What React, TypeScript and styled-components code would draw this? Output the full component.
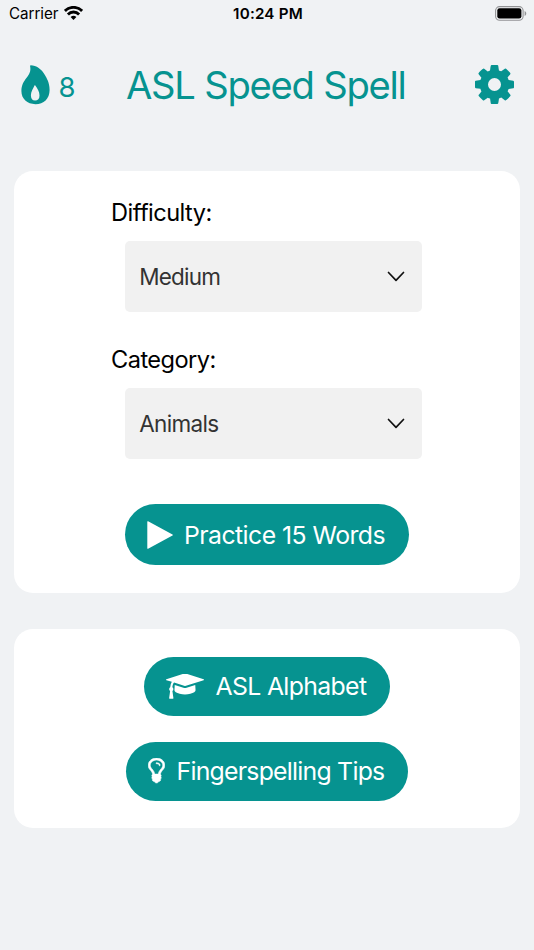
import React from 'react';
import styled, { createGlobalStyle } from 'styled-components';

const TEAL = '#069390';

const GlobalStyle = createGlobalStyle`
  * { box-sizing: border-box; }
  html, body { margin: 0; background: #f0f2f4; }
  body { font-family: Inter, "Liberation Sans", sans-serif; color: #000; }
  button { font-family: inherit; border: 0; margin: 0; }
`;

const Screen = styled.div`
  width: 534px;
  height: 950px;
  overflow: hidden;
  background: #f0f2f4;
`;

const StatusBar = styled.div`
  display: grid;
  grid-template-columns: 1fr auto 1fr;
  align-items: center;
  height: 27px;
  padding: 0 7px 0 9px;
`;

const Carrier = styled.div`
  display: flex;
  align-items: center;
  gap: 6px;
`;

const Battery = styled.svg`
  justify-self: end;
`;

const Text = styled.span<{ $size: number; $spacing?: number; $weight?: number }>`
  display: block;
  font-size: ${(p) => p.$size}px;
  letter-spacing: ${(p) => p.$spacing ?? 0}px;
  font-weight: ${(p) => p.$weight ?? 400};
  line-height: 1.2;
  white-space: nowrap;
`;

const StatusText = styled(Text)`
  padding-top: 2px;
`;

const Header = styled.header`
  display: grid;
  grid-template-columns: 105px 1fr 39px;
  align-items: center;
  height: 115px;
  padding: 0 20px 0 21px;
  color: ${TEAL};
`;

const Streak = styled.div`
  display: flex;
  align-items: center;
  gap: 8.5px;
`;

const StreakCount = styled(Text)`
  padding-top: 6px;
`;

const Title = styled.h1`
  margin: 2px 0 0;
  font-weight: 400;
`;

const IconButton = styled.button`
  display: flex;
  padding: 0;
  color: inherit;
  background: none;
`;

const Card = styled.section<{ $height: number }>`
  height: ${(p) => p.$height}px;
  margin: 0 14px 36px 13.5px;
  border-radius: 19px;
  background: #fff;
`;

const SetupCard = styled(Card)`
  margin-top: 28.5px;
  padding: 28.7px 98px 0 97.5px;
`;

const LinksCard = styled(Card)`
  display: flex;
  flex-direction: column;
  align-items: center;
  gap: 25.5px;
  padding-top: 28px;
`;

const Field = styled.div<{ $gap: number }>`
  height: 113px;
  margin-bottom: ${(p) => p.$gap}px;
`;

const Select = styled.button`
  display: flex;
  align-items: center;
  justify-content: space-between;
  width: 296.4px;
  height: 70.4px;
  margin: 13.7px 0 0 14.2px;
  padding: 0 17px 0 14px;
  border-radius: 5px;
  color: #333;
  background: #f1f1f1;
`;

const Pill = styled.button<{ $width: number; $height: number; $gap: number; $indent?: number }>`
  display: flex;
  align-items: center;
  gap: ${(p) => p.$gap}px;
  width: ${(p) => p.$width}px;
  height: ${(p) => p.$height}px;
  flex-shrink: 0;
  margin-left: ${(p) => p.$indent ?? 0}px;
  padding: 0 0 0 22px;
  border-radius: 31px;
  color: #fff;
  background: ${TEAL};
`;

const PillLabel = styled(Text)`
  padding-top: 1px;
`;

const PracticeLabel = styled(PillLabel)`
  padding-top: 2.5px;
`;

const WifiIcon = () => (
  <svg width="19" height="14" viewBox="0 0 19 14">
    <g fill="none" stroke="#000" strokeWidth="2.9">
      <path d="M.9 4.9a12.2 12.2 0 0 1 17.2 0" />
      <path d="M3.9 8.4a7.9 7.9 0 0 1 11.2 0" />
    </g>
    <path d="M9.5 14 6.6 11.1a4.1 4.1 0 0 1 5.8 0z" />
  </svg>
);

const BatteryIcon = () => (
  <Battery width="32" height="15" viewBox="0 0 32 15">
    <rect x=".6" y=".6" width="27.5" height="13.6" rx="4" fill="none" stroke="#929395" strokeWidth="1.1" />
    <rect x="2.3" y="2.3" width="24.1" height="10.2" rx="2.3" />
    <path d="M29.6 5v5c2.2-1 2.2-4 0-5z" fill="#929395" />
  </Battery>
);

const FlameIcon = () => (
  <svg width="29" height="40" viewBox="0 0 29 40" fill="currentColor">
    <path
      fillRule="evenodd"
      d="M9.4.2C15.2.1 20.8 4.2 23.9 10c1.7 3 4.7 7.7 4.7 14.9 0 8.7-5.9 14.3-14.1 14.3C6.2 39.2.4 34 .4 26.1c0-5.9 2.4-9.5 5-13C8.4 9.1 10.1 6.3 9.1 1.2zM13.500 20.500c-1.500 3.200-3.600 6.300-3.600 9.800 0 3.500 1.500 5.200 4.200 5.200 2.800 0 4.400-1.800 4.400-5.100 0-3.600-1.700-6.300-4.200-9.900-.3-.5-.6-.5-.8 0z"
    />
  </svg>
);

const GearIcon = () => (
  <svg width="39" height="39" viewBox="0 128 1536 1536" fill="currentColor">
    <path
      fillRule="evenodd"
      d="M1024 896q0-106-75-181t-181-75-181 75-75 181 75 181 181 75 181-75 75-181zm512-109v222q0 12-8 23t-20 13l-185 28q-19 54-39 91 35 50 107 138 10 12 10 25t-9 23q-27 37-99 108t-94 71q-12 0-26-9l-138-108q-44 23-91 38-16 136-29 186-7 28-36 28h-222q-14 0-24.5-8.5t-11.5-21.5l-28-184q-49-16-90-37l-141 107q-10 9-25 9-14 0-25-11-126-114-165-168-7-10-7-23 0-12 8-23 15-21 51-66.5t54-70.5q-27-50-41-99l-183-27q-13-2-21-12.5t-8-23.5v-222q0-12 8-23t19-13l186-28q14-46 39-92-40-57-107-138-10-12-10-24 0-10 9-23 26-36 98.5-107.5t94.5-71.5q13 0 26 10l138 107q44-23 91-38 16-136 29-186 7-28 36-28h222q14 0 24.5 8.5t11.5 21.5l28 184q49 16 90 37l142-107q9-9 24-9 13 0 25 10 129 119 165 170 7 8 7 22 0 12-8 23-15 21-51 66.5t-54 70.5q26 50 41 98l183 28q13 2 21 12.5t8 23.5z"
    />
  </svg>
);

const ChevronIcon = () => (
  <svg width="18" height="11" viewBox="0 0 18 11" fill="none" stroke="#111" strokeWidth="1.7">
    <path d="M1.5 1.5 9 9.3l7.5-7.8" strokeLinecap="round" strokeLinejoin="round" />
  </svg>
);

const PlayIcon = () => (
  <svg width="26" height="28" viewBox="0 0 26 28" fill="currentColor">
    <path d="M.3.7c0-.6.3-.7.8-.4l24.4 13.1c.5.3.5.8 0 1.1L1.1 27.7c-.5.3-.8.1-.8-.4z" />
  </svg>
);

const CapIcon = () => (
  <svg width="38" height="26" viewBox="0 190 2304 1536" fill="currentColor">
    <path d="M1774 836l18 316q4 69-82 128t-235 93.5-323 34.5-323-34.5-235-93.5-82-128l18-316 574 181q22 7 48 7t48-7zm530-324q0 23-22 31l-1120 352q-4 1-10 1t-10-1l-652-206q-43 34-71 111.5t-34 178.5q63 36 63 109 0 69-58 107l58 433q2 14-8 25-9 11-24 11h-192q-15 0-24-11-10-11-8-25l58-433q-58-38-58-107 0-73 65-111 11-207 98-330l-333-104q-22-8-22-31t22-31l1120-352q4-1 10-1t10 1l1120 352q22 8 22 31z" />
  </svg>
);

const BulbIcon = () => (
  <svg width="17" height="27" viewBox="0 128 1024 1664" fill="currentColor" stroke="currentColor" strokeWidth="36">
    <path d="M736 576q0 13-9.5 22.5t-22.5 9.5-22.5-9.5-9.5-22.5q0-46-54-71t-106-25q-13 0-22.5-9.5t-9.5-22.5 9.5-22.5 22.5-9.5q50 0 99.5 16t87 54 37.5 90zm160 0q0-72-34.5-134t-90-101.5-123-62-136.5-22.5-136.5 22.5-123 62-90 101.5-34.5 134q0 101 68 180 10 11 30.5 33t30.5 33q128 153 141 298h228q13-145 141-298 10-11 30.5-33t30.5-33q68-79 68-180zm128 0q0 155-103 268-45 49-74.5 87t-59.5 95.5-34 107.5q47 28 47 82 0 37-25 64 25 27 25 64 0 52-45 81 13 23 13 47 0 46-31.5 71t-77.5 25q-20 44-60 70t-87 26-87-26-60-70q-46 0-77.5-25t-31.5-71q0-24 13-47-45-29-45-81 0-37 25-64-25-27-25-64 0-54 47-82-4-50-34-107.5t-59.5-95.5-74.5-87q-103-113-103-268 0-99 44.5-184.5t117-142 164-89 186.5-32.5 186.5 32.5 164 89 117 142 44.5 184.5z" />
  </svg>
);

export default function App() {
  return (
    <Screen>
      <GlobalStyle />
      <StatusBar>
        <Carrier>
          <StatusText $size={15.2} $spacing={-0.05}>Carrier</StatusText>
          <WifiIcon />
        </Carrier>
        <StatusText $size={15.2} $spacing={0.2} $weight={600}>10:24 PM</StatusText>
        <BatteryIcon />
      </StatusBar>
      <Header>
        <Streak>
          <FlameIcon />
          <StreakCount $size={27.5}>8</StreakCount>
        </Streak>
        <Title>
          <Text $size={38.2} $spacing={-1.25}>ASL Speed Spell</Text>
        </Title>
        <IconButton aria-label="Settings">
          <GearIcon />
        </IconButton>
      </Header>
      <main>
        <SetupCard $height={422.5}>
          <Field $gap={34}>
            <Text $size={23.6} $spacing={-0.55}>Difficulty:</Text>
            <Select>
              <Text $size={22.5} $spacing={-0.8}>Medium</Text>
              <ChevronIcon />
            </Select>
          </Field>
          <Field $gap={45.1}>
            <Text $size={23.6} $spacing={-0.55}>Category:</Text>
            <Select>
              <Text $size={22.5} $spacing={-0.65}>Animals</Text>
              <ChevronIcon />
            </Select>
          </Field>
          <Pill $width={283.5} $height={61} $gap={11} $indent={14}>
            <PlayIcon />
            <PracticeLabel $size={24.8} $spacing={-0.55}>Practice 15 Words</PracticeLabel>
          </Pill>
        </SetupCard>
        <LinksCard $height={198.5}>
          <Pill $width={246.5} $height={59} $gap={12}>
            <CapIcon />
            <PillLabel $size={24.8} $spacing={-0.65}>ASL Alphabet</PillLabel>
          </Pill>
          <Pill $width={282.5} $height={59} $gap={12}>
            <BulbIcon />
            <PillLabel $size={24.8} $spacing={-0.75}>Fingerspelling Tips</PillLabel>
          </Pill>
        </LinksCard>
      </main>
    </Screen>
  );
}
